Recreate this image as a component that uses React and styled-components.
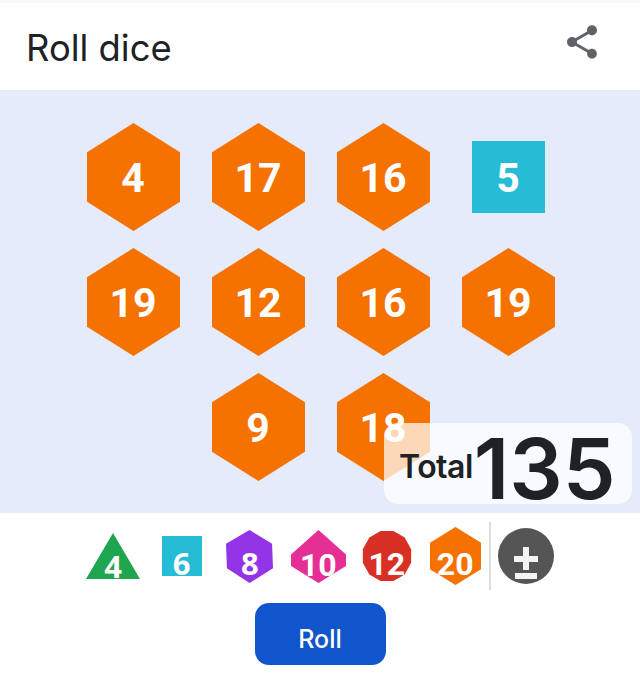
import React from "react";
import styled, { createGlobalStyle } from "styled-components";
import { MdShare } from "react-icons/md";

const Global = createGlobalStyle`
  html, body { margin: 0; padding: 0; background: #fff; }
  body { font-family: Inter, Roboto, "Liberation Sans", sans-serif; }
`;

const Page = styled.div`
  width: 640px;
  height: 697px;
  display: flex;
  flex-direction: column;
  overflow: hidden;
  background: #fff;
`;
const TopStrip = styled.div`
  height: 3px;
  background: #f8f8f8;
`;
const Header = styled.header`
  height: 87px;
  display: flex;
  align-items: center;
  justify-content: space-between;
  padding: 0 38px 6px 26px;
  box-sizing: border-box;
`;
const Title = styled.h1`
  margin: 9px 0 0;
  font: 400 36.4px/40px Inter, sans-serif;
  color: #202124;
`;
const ShareButton = styled.button`
  width: 40px;
  height: 40px;
  margin-top: -4px;
  padding: 0;
  border: 0;
  background: none;
  color: #5f6368;
  font-size: 40px;
  display: flex;
`;
const Panel = styled.section`
  position: relative;
  height: 423px;
  background: #e5ebfb;
  padding: 24px 0 0 1px;
  box-sizing: border-box;
`;
const Rolled = styled.div`
  width: 500px;
  margin: 0 auto;
  display: flex;
  flex-wrap: wrap;
  justify-content: center;
`;
const Cell = styled.div`
  width: 125px;
  height: 125px;
  display: flex;
  align-items: center;
  justify-content: center;
`;
const Die = styled.div`
  display: grid;
  width: ${(p) => p.$w}px;
  height: ${(p) => p.$h}px;
  & > * { grid-area: 1 / 1; }
`;
const Shape = styled.svg`
  display: block;
  width: 100%;
  height: 100%;
`;
const RollFace = styled.span`
  place-self: center;
  margin-top: 3px;
  color: #fff;
  font: 700 41px/1 Roboto, sans-serif;
  z-index: 1;
`;
const TrayFace = styled.span`
  justify-self: center;
  align-self: end;
  margin-bottom: ${(p) => p.$low}px;
  color: #fff;
  font: 700 ${(p) => p.$size}px/1 ${(p) => p.$family}, sans-serif;
  z-index: 1;
`;
const TotalCard = styled.div`
  position: absolute;
  right: 8px;
  bottom: 9px;
  width: 248px;
  height: 81px;
  box-sizing: border-box;
  padding-left: 15px;
  border-radius: 14px;
  background: rgba(255, 255, 255, 0.72);
  display: flex;
  align-items: center;
  color: #202124;
`;
const TotalLabel = styled.span`
  margin-top: 7px;
  font: 600 32px/1 Inter, sans-serif;
  letter-spacing: -0.5px;
`;
const TotalValue = styled.span`
  margin: 10px 0 0 1px;
  font: 600 84px/1 Inter, sans-serif;
`;
const Tray = styled.div`
  height: 90px;
  padding-top: 9px;
  box-sizing: border-box;
  padding-left: 79px;
  display: flex;
  align-items: flex-start;
`;
const TrayCell = styled.div`
  width: 68.4px;
  height: 68px;
  display: flex;
  align-items: center;
  justify-content: center;
`;
const Divider = styled.div`
  width: 2px;
  height: 68px;
  background: #dcdcdc;
`;
const ModifierIcon = styled.svg`
  width: 56px;
  height: 56px;
  margin: 6px 0 0 7px;
`;
const RollBar = styled.div`
  display: flex;
  justify-content: center;
`;
const RollButton = styled.button`
  width: 131px;
  height: 62px;
  padding: 10px 0 0;
  border: 0;
  border-radius: 14px;
  background: #1155cc;
  color: #fff;
  font: 500 25px/1 Inter, sans-serif;
`;

const HEX = "50,0 100,27 100,73 50,100 0,73 0,27";
const polyPoints = (n, start) =>
  Array.from({ length: n }, (_, i) => {
    const a = start + (i * 2 * Math.PI) / n;
    return `${(50 + 50 * Math.cos(a)).toFixed(1)},${(50 + 50 * Math.sin(a)).toFixed(1)}`;
  }).join(" ");

const SHAPES = {
  4: "50,0 100,100 0,100",
  6: "0,0 100,0 100,100 0,100",
  8: "50,0 98,26 100,72 50,100 2,72 0,26",
  10: "50,0 100,46 100,68 50,100 0,68 0,46",
  12: polyPoints(12, -Math.PI / 2 + Math.PI / 12),
  20: HEX,
};
const COLORS = {
  4: "#1fa450",
  6: "#26bcd5",
  8: "#9334e6",
  10: "#e52f95",
  12: "#d93025",
  20: "#f57200",
};

const rolls = [
  [20, 4], [20, 17], [20, 16], [6, 5],
  [20, 19], [20, 12], [20, 16], [20, 19],
  [20, 9], [20, 18],
];
const tray = [
  { d: 4, w: 54, h: 46, size: 31, low: -3, family: '"Open Sans"' },
  { d: 6, w: 40, h: 40, size: 31, low: -3, family: '"Open Sans"' },
  { d: 8, w: 47, h: 53, size: 31, low: 4, family: '"Open Sans"' },
  { d: 10, w: 55, h: 53, size: 32, low: 2, family: "Roboto" },
  { d: 12, w: 50, h: 52, size: 32, low: 2, family: "Roboto" },
  { d: 20, w: 51, h: 58, size: 32, low: 5, family: "Roboto" },
];

const Polygon = ({ points, fill }) => (
  <Shape viewBox="0 0 100 100" preserveAspectRatio="none">
    <polygon points={points} fill={fill} />
  </Shape>
);

export default function App() {
  return (
    <Page>
      <Global />
      <TopStrip />
      <Header>
        <Title>Roll dice</Title>
        <ShareButton aria-label="Share"><MdShare /></ShareButton>
      </Header>
      <Panel>
        <Rolled>
          {rolls.map(([d, v], i) => (
            <Cell key={i}>
              <Die $w={d === 6 ? 73 : 93} $h={d === 6 ? 72 : 108}>
                <Polygon points={SHAPES[d]} fill={COLORS[d]} />
                <RollFace>{v}</RollFace>
              </Die>
            </Cell>
          ))}
        </Rolled>
        <TotalCard>
          <TotalLabel>Total</TotalLabel>
          <TotalValue>135</TotalValue>
        </TotalCard>
      </Panel>
      <Tray>
        {tray.map((t) => (
          <TrayCell key={t.d}>
            <Die $w={t.w} $h={t.h}>
              <Polygon points={SHAPES[t.d]} fill={COLORS[t.d]} />
              <TrayFace $size={t.size} $low={t.low} $family={t.family}>{t.d}</TrayFace>
            </Die>
          </TrayCell>
        ))}
        <Divider />
        <ModifierIcon viewBox="0 0 56 56" aria-label="Add modifier">
          <circle cx="28" cy="28" r="28" fill="#555" />
          <path d="M25 19h6v9h9v6h-9v8h-6v-8h-9v-6h9z" fill="#f4f4f4" />
          <rect x="17" y="45" width="22" height="6" fill="#f4f4f4" />
        </ModifierIcon>
      </Tray>
      <RollBar>
        <RollButton>Roll</RollButton>
      </RollBar>
    </Page>
  );
}
